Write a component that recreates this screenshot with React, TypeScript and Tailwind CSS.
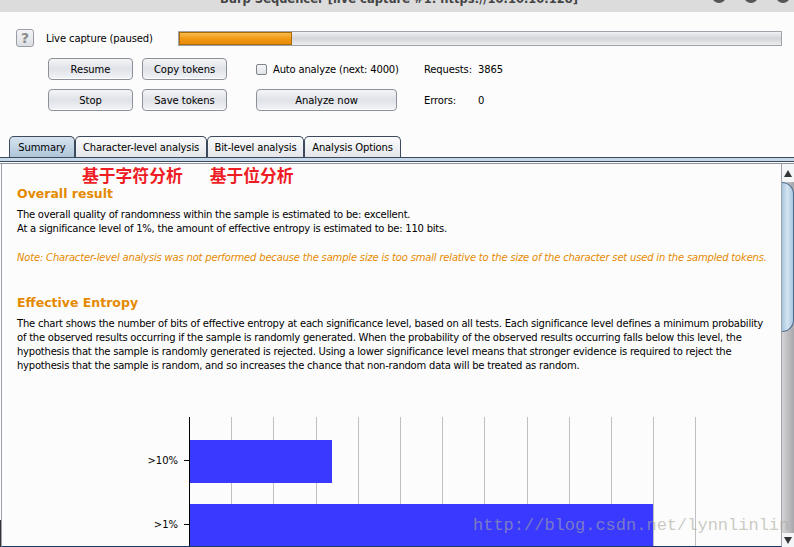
import React from 'react'

const font = { fontFamily: '"DejaVu Sans", sans-serif' }

const Btn: React.FC<{ label: string; className?: string }> = ({ label, className = 'w-[85px]' }) => (
  <button className={`h-[22px] ${className} shrink-0 rounded-[4px] border border-[#8d9098] bg-gradient-to-b from-[#f4f5f7] via-[#dfe2e8] to-[#f2f4f7] text-[10px] tracking-[-0.05px] text-black shadow-[inset_0_-1px_0_#fff]`}>
    {label}
  </button>
)

const Tab: React.FC<{ label: string; width: string; active?: boolean }> = ({ label, width, active }) => (
  <div
    className={`h-[21px] ${width} flex items-center justify-center rounded-t-[5px] border border-b-0 border-[#3d4a5c] pt-[1px] text-[10px] tracking-[-0.15px] text-black ${
      active ? 'bg-gradient-to-b from-[#d8e4ef] to-[#aec6da]' : 'bg-gradient-to-b from-[#fbfbfc] to-[#e4e6ea]'
    }`}
  >
    {label}
  </div>
)

const Chart: React.FC = () => {
  const grid = [231.5, 273.5, 316.5, 358.5, 400.5, 442.5, 484.5, 527.5, 569.5, 611.5, 653.5, 695.5]
  return (
    <svg width="780" height="129" className="block">
      {grid.map((x) => (
        <line key={x} x1={x - 1} x2={x - 1} y1="0" y2="129" stroke="#c0c0c0" />
      ))}
      <rect x="188" y="23" width="143" height="43" fill="#3939ff" />
      <rect x="188" y="87" width="464" height="42" fill="#3939ff" />
      <line x1="188.5" x2="188.5" y1="0" y2="129" stroke="#000" />
      <line x1="183" x2="188" y1="43.5" y2="43.5" stroke="#000" />
      <line x1="183" x2="188" y1="107.5" y2="107.5" stroke="#000" />
      <text x="177" y="47" textAnchor="end" fontSize="10" fill="#000">&gt;10%</text>
      <text x="177" y="111" textAnchor="end" fontSize="10" fill="#000">&gt;1%</text>
    </svg>
  )
}

export default function App() {
  return (
    <div className="relative h-[547px] w-[794px] overflow-hidden bg-[#fcfcfc] text-black" style={font}>
      {/* title bar, cut off by the screenshot */}
      <div className="relative h-3 overflow-hidden bg-[#dcdcdc]">
        <div className="-mt-[9px] ml-[220px] whitespace-nowrap text-[11.5px] leading-[16px] font-bold text-[#444]">
          Burp Sequencer [live capture #1: https://10.10.10.128]
        </div>
        <div className="absolute -top-[11px] right-[4px] flex gap-[18px]">
          <span className="h-[14px] w-[14px] rounded-full bg-[#555]" />
          <span className="h-[14px] w-[14px] rounded-full bg-[#555]" />
          <span className="h-[14px] w-[14px] rounded-full bg-[#555]" />
        </div>
      </div>

      {/* capture status */}
      <div className="flex h-[124px] flex-col pt-[17px] pr-3 pl-4">
        <div className="flex items-center">
          <div className="flex h-[18px] w-[18px] items-center justify-center rounded-[3px] border border-[#9a9da3] bg-gradient-to-b from-[#f4f5f7] to-[#dcdfe4] text-[14px] font-bold text-[#8b8b8b]">
            ?
          </div>
          <span className="ml-3 w-[132px] text-[10px] tracking-[-0.12px]">Live capture (paused)</span>
          <div className="h-[15px] flex-1 overflow-hidden border border-[#a0a3a9] bg-gradient-to-b from-[#f0f1f3] via-[#d3d5da] to-[#eceef0]">
            <div className="h-full w-[113px] border border-[#a86a08] bg-gradient-to-b from-[#f9bc4a] via-[#f19a12] to-[#e98a08]" />
          </div>
        </div>
        <div className="mt-[11px] ml-8 flex gap-[9px]">
          <div className="flex flex-col gap-[9px]">
            <Btn label="Resume" />
            <Btn label="Stop" />
          </div>
          <div className="flex flex-col gap-[9px]">
            <Btn label="Copy tokens" />
            <Btn label="Save tokens" />
          </div>
          <div className="ml-5 flex w-[141px] flex-col gap-[9px]">
            <div className="flex h-[22px] items-center">
              <span className="h-[11px] w-[11px] shrink-0 rounded-[2px] border border-[#7f838a] bg-gradient-to-b from-[#f4f5f7] to-[#e2e4e8]" />
              <span className="ml-[6px] whitespace-nowrap text-[10px] tracking-[-0.18px]">Auto analyze (next: 4000)</span>
            </div>
            <Btn label="Analyze now" className="w-[141px]" />
          </div>
          <div className="ml-[18px] flex flex-col gap-[9px] text-[10px] tracking-[-0.15px]">
            <div className="flex h-[22px] items-center"><span className="w-[54px]">Requests:</span>3865</div>
            <div className="flex h-[22px] items-center"><span className="w-[54px]">Errors:</span>0</div>
          </div>
        </div>
      </div>

      {/* tabs */}
      <div className="flex pl-[9px]">
        <Tab label="Summary" width="w-[66px]" active />
        <Tab label="Character-level analysis" width="w-[132px]" />
        <Tab label="Bit-level analysis" width="w-[97px]" />
        <Tab label="Analysis Options" width="w-[97px]" />
      </div>
      <div className="h-[5px] border-y border-[#3d4a5c] bg-[#c4d8ea]" />
      <div className="h-[2px] border-b border-[#8f93a0]" />

      <div className="flex h-[383px]">
        <div className="relative ml-[1px] flex-1 border-r border-b border-l border-r-[#a0a3a9] border-b-[#1c3a6e] border-l-[#a0a0aa]">
          <div
            className="flex gap-[27px] pt-[1px] pl-[80px] text-[16.8px] leading-[20px] font-bold text-[#ee1c25]"
            style={{ fontFamily: '"Noto Sans CJK SC", sans-serif' }}
          >
            <span>基于字符分析</span>
            <span>基于位分析</span>
          </div>
          <div className="pr-2 pl-[15px]">
            <h2 className="mt-[1px] text-[12.5px] leading-[16px] font-bold text-[#e58a00]">Overall result</h2>
            <p className="mt-[6px] whitespace-nowrap text-[10px] leading-[14px] tracking-[-0.23px]">
              The overall quality of randomness within the sample is estimated to be: excellent.
              <br />
              At a significance level of 1%, the amount of effective entropy is estimated to be: 110 bits.
            </p>
            <p className="mt-[15px] whitespace-nowrap text-[10px] leading-[14px] tracking-[-0.185px] text-[#e58a00] italic">
              Note: Character-level analysis was not performed because the sample size is too small relative to the size of the character set used in the sampled tokens.
            </p>
            <h2 className="mt-[30px] text-[12.5px] leading-[16px] font-bold text-[#e58a00]">Effective Entropy</h2>
            <p className="mt-[6px] whitespace-nowrap text-[10px] leading-[14px] tracking-[-0.22px]">
              The chart shows the number of bits of effective entropy at each significance level, based on all tests. Each significance level defines a minimum probability
              <br />
              of the observed results occurring if the sample is randomly generated. When the probability of the observed results occurring falls below this level, the
              <br />
              hypothesis that the sample is randomly generated is rejected. Using a lower significance level means that stronger evidence is required to reject the
              <br />
              hypothesis that the sample is random, and so increases the chance that non-random data will be treated as random.
            </p>
          </div>
          <div className="absolute top-[253px] -left-[1px]">
            <Chart />
          </div>
        </div>

        {/* scrollbar */}
        <div className="flex w-[12px] flex-col bg-gradient-to-r from-[#d4d4d6] to-[#a8a8ac]">
          <div className="flex h-[18px] items-center justify-center bg-[#f4f5f7]">
            <span className="h-0 w-0 border-x-[4px] border-b-[7px] border-x-transparent border-b-[#333]" />
          </div>
          <div className="h-[150px] rounded-r-[12px] border-y border-r border-[#4f6c8c] bg-gradient-to-r from-[#a9c6e0] via-[#d3e4f2] to-[#a9c6e0]" />
          <div className="flex-1" />
          <div className="flex h-[14px] items-center justify-center bg-[#f4f5f7]">
            <span className="h-0 w-0 border-x-[4px] border-t-[7px] border-x-transparent border-t-[#333]" />
          </div>
        </div>
      </div>

      {/* dark window corner at the bottom left */}
      <div className="absolute bottom-0 left-0 h-[27px] w-[1px] bg-[#333]" />

      {/* blog watermark over the screenshot */}
      <div
        className="absolute top-[514px] left-[473px] whitespace-nowrap text-[17px] leading-[24px] text-[#a8a89c]/60"
        style={{ fontFamily: '"Liberation Mono", monospace' }}
      >
        http://blog.csdn.net/lynnlinlin
      </div>
    </div>
  )
}
